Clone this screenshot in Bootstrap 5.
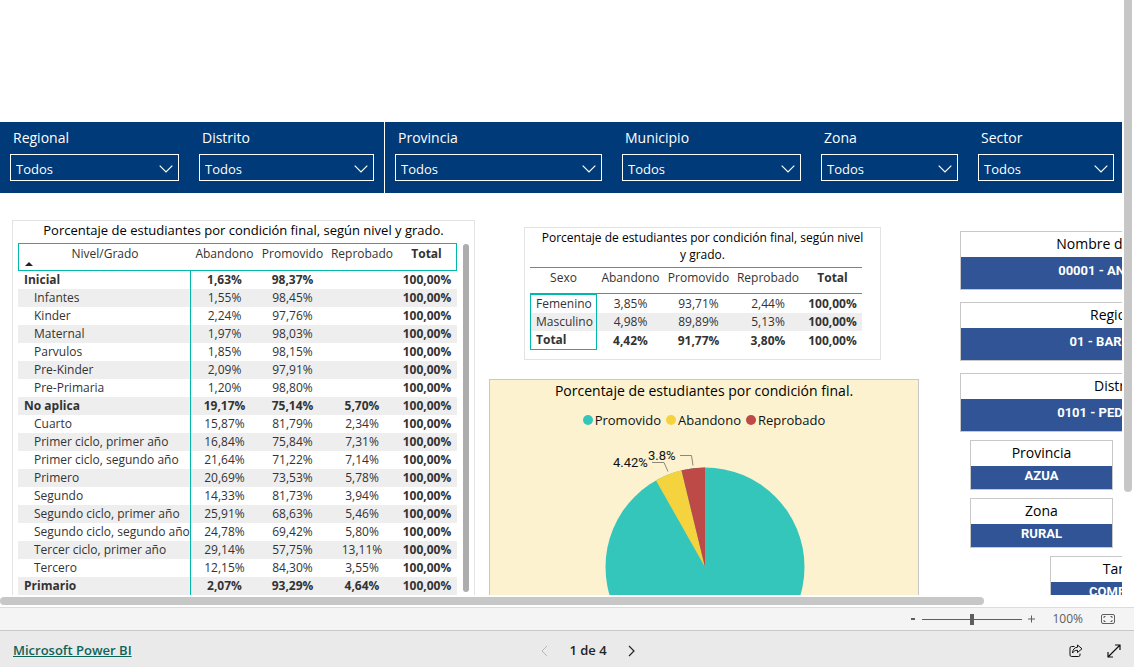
<!DOCTYPE html>
<html lang="es">
<head>
<meta charset="utf-8">
<meta name="viewport" content="width=device-width, initial-scale=1">
<title>Microsoft Power BI</title>
<link href="https://cdn.jsdelivr.net/npm/bootstrap@5.3.0/dist/css/bootstrap.min.css" rel="stylesheet">
<style>
  :root { --navy: #003a78; --card-blue: #305496; --teal: #01b8aa; --ink: #333; }
  body { font-family: "Open Sans", "Noto Sans", sans-serif; font-size: 12px; color: var(--ink); background: #fff; }

  /* Report viewport with its own scrollbars */
  .report-area { min-height: 0; padding-right: 12px; }
  .report-clip { min-height: 0; }
  .scroll-v { top: -8px; right: 2px; width: 8px; height: 500px; border-radius: 4px; background: #c7c7c7; }
  .scroll-h-track { height: 12px; padding-top: 2px; }
  .scroll-h { height: 8px; width: 87.7%; border-radius: 4px; background: #c7c7c7; }

  /* Filter band */
  .filter-band { margin-top: 122px; background: var(--navy); color: #fff; display: grid; grid-template-columns: 385fr 737fr; }
  .filter-group { display: grid; column-gap: 20px; padding: 6px 10px 12px; }
  .filter-group.geo { grid-template-columns: 169fr 175fr; border-right: 1px solid #fff; }
  .filter-group.place { grid-template-columns: 207fr 179fr 137fr 136fr; padding-right: 8px; }
  .filter-group label { font-size: 14px; line-height: 20px; padding-left: 3px; margin-bottom: 6px; }
  .filter-group .form-select {
    height: 27px; padding: 3px 28px 0 5px; font-size: 13px; line-height: 22px; color: #fff;
    background-color: transparent; border: 1px solid #fff; border-radius: 0;
    background-image: url("data:image/svg+xml,%3Csvg xmlns='http://www.w3.org/2000/svg' viewBox='0 0 14 8'%3E%3Cpath d='M.7.7 7 7 13.300.7' fill='none' stroke='%23fff' stroke-width='1.200'/%3E%3C/svg%3E");
    background-size: 14px 8px; background-position: right 5px top 10px;
  }
  .filter-group option { color: #000; }

  /* Report body */
  .report-grid { display: grid; grid-template-columns: 463px 430px 343px; column-gap: 14px; padding-left: 12px; min-width: 1280px; align-items: start; }
  .visual { border: 1px solid #e3e3e3; background: #fff; }
  .visual-title { font-size: 13px; line-height: 17px; color: #000; text-align: center; margin: 0; font-weight: 400; }

  .matrix { border-collapse: separate; border-spacing: 0; table-layout: fixed; }
  .matrix th, .matrix td { padding: 0; text-align: center; line-height: 18px; font-weight: 400; white-space: nowrap; }
  .matrix tbody tr.striped > * { background: #eee; }
  .matrix .fw-bold > *, .matrix tr > :last-child { font-weight: 700; }
  .matrix tbody th { text-align: left; padding-left: 16px; }
  .matrix tbody .fw-bold > th { padding-left: 6px; }
  .matrix thead th { vertical-align: top; height: 27px; border: 0 solid var(--teal); border-width: 1px 0; padding-top: 1px; }

  .by-grade { margin-top: 27px; padding: 1px 5px 0; }
  .by-grade .matrix { width: 439px; }
  .by-grade thead th { height: 28px; }
  .by-grade thead th:first-child { border-left-width: 1px; }
  .by-grade thead th:last-child { border-right-width: 1px; }
  .by-grade tbody th { border-right: 1px solid var(--teal); }
  .sort-mark { bottom: 4px; left: 6px; }
  .inner-scroll { width: 6px; height: 348px; border-radius: 3px; background: #adadad; margin-top: 1px; }

  .by-sex { margin: 34px 38px 0 35px; padding: 1px 5px 9px; }
  .by-sex .visual-title { font-size: 12px; padding-bottom: 4px; }
  .by-sex .matrix { width: 332px; }
  .by-sex tbody th, .by-sex tbody .fw-bold > th { padding-left: 5px; border: 0 solid var(--teal); border-width: 0 1px; }
  .by-sex tbody tr:first-child > * { border-top: 1px solid transparent; }
  .by-sex tbody tr:first-child > th { border-top-color: var(--teal); }
  .by-sex tbody tr:last-child th { border-bottom-width: 1px; }

  .pie-visual { margin-top: 19px; border-color: #c8c8c8; background: #fcf2cf; }
  .pie-visual .visual-title { font-size: 14px; line-height: 22px; }
  .legend-list { gap: 5px; margin: 8px 0 0; color: #111; font-size: 13px; line-height: 20px; }
  .legend-dot { width: 10px; height: 10px; border-radius: 50%; margin-right: 2px; }
  .pie-visual svg text { font: 400 13px Roboto, sans-serif; fill: #111; }

  .info-cards { margin: 38px 0 0 27px; }
  .info-card { border: 1px solid #c8c8c8; text-align: center; background: #fff; }
  .info-card + .info-card { margin-top: 12px; }
  .info-card dt { font-size: 14px; line-height: 20px; padding: 2px 0 3px; font-weight: 400; color: #000; }
  .info-card dd { margin: 0; background: var(--card-blue); color: #fff; font: 700 13px/20px Roboto, sans-serif; padding: 4px 0 8px; }
  .info-card + .small-card { width: 143px; margin: 8px 0 0 10px; }
  .info-card.small-card dd { padding: 0 0 3px; }
  .info-card + .shift-card { width: 146px; margin: 8px 0 0 90px; }
  .info-card.shift-card dd { padding-top: 0; }

  /* Bars under the report */
  .zoom-bar { height: 23px; background: #f4f4f4; border-top: 1px solid #dcdcdc; color: #605e5c; padding-right: 19px; }
  .zoom-bar button, .foot-bar button { border: 0; background: none; padding: 0; line-height: 1; color: inherit; display: inline-flex; }
  .zoom-range { appearance: none; width: 100px; height: 12px; margin: 0 6px; background: linear-gradient(#605e5c, #605e5c) center / 100% 1px no-repeat; }
  .zoom-range::-webkit-slider-thumb { appearance: none; width: 4px; height: 11px; background: #605e5c; }
  .zoom-level { margin: 0 18px 0 16px; }
  .foot-bar { height: 37px; background: #eaeaea; border-top: 1px solid #c8c8c8; color: #252423; padding: 3px 13px 0; font-size: 13px; font-weight: 600; display: grid; grid-template-columns: 1fr auto 1fr; align-items: center; }
  .foot-bar a { color: #0e6457; }
  .foot-bar nav { padding-left: 42px; gap: 21px; }
</style>
</head>
<body>
<div class="d-flex flex-column vh-100 overflow-hidden">

  <main class="report-area position-relative flex-fill d-flex flex-column overflow-hidden">
    <div class="report-clip flex-fill overflow-hidden">
      <form class="filter-band">
        <div class="filter-group geo">
          <div class="d-flex flex-column"><label for="f-regional">Regional</label><select id="f-regional" class="form-select"><option>Todos</option></select></div>
          <div class="d-flex flex-column"><label for="f-distrito">Distrito</label><select id="f-distrito" class="form-select"><option>Todos</option></select></div>
        </div>
        <div class="filter-group place">
          <div class="d-flex flex-column"><label for="f-provincia">Provincia</label><select id="f-provincia" class="form-select"><option>Todos</option></select></div>
          <div class="d-flex flex-column"><label for="f-municipio">Municipio</label><select id="f-municipio" class="form-select"><option>Todos</option></select></div>
          <div class="d-flex flex-column"><label for="f-zona">Zona</label><select id="f-zona" class="form-select"><option>Todos</option></select></div>
          <div class="d-flex flex-column"><label for="f-sector">Sector</label><select id="f-sector" class="form-select"><option>Todos</option></select></div>
        </div>
      </form>

      <div class="report-grid">
        <section class="visual by-grade">
          <h2 class="visual-title pb-1">Porcentaje de estudiantes por condición final, según nivel y grado.</h2>
          <div class="d-flex justify-content-between">
            <table class="matrix">
              <colgroup><col style="width:173px"><col style="width:67px"><col style="width:69px"><col style="width:70px"><col style="width:60px"></colgroup>
              <thead><tr>
                <th scope="col" class="position-relative">Nivel/Grado
                  <svg class="sort-mark position-absolute" width="8" height="4" viewBox="0 0 8 4" aria-hidden="true"><path d="M0 4 4 0l4 4z" fill="#252423"/></svg></th>
                <th scope="col">Abandono</th><th scope="col">Promovido</th><th scope="col">Reprobado</th><th scope="col">Total</th>
              </tr></thead>
              <tbody>
                <tr class="fw-bold"><th scope="row">Inicial</th><td>1,63%</td><td>98,37%</td><td></td><td>100,00%</td></tr>
                <tr class="striped"><th scope="row">Infantes</th><td>1,55%</td><td>98,45%</td><td></td><td>100,00%</td></tr>
                <tr><th scope="row">Kinder</th><td>2,24%</td><td>97,76%</td><td></td><td>100,00%</td></tr>
                <tr class="striped"><th scope="row">Maternal</th><td>1,97%</td><td>98,03%</td><td></td><td>100,00%</td></tr>
                <tr><th scope="row">Parvulos</th><td>1,85%</td><td>98,15%</td><td></td><td>100,00%</td></tr>
                <tr class="striped"><th scope="row">Pre-Kinder</th><td>2,09%</td><td>97,91%</td><td></td><td>100,00%</td></tr>
                <tr><th scope="row">Pre-Primaria</th><td>1,20%</td><td>98,80%</td><td></td><td>100,00%</td></tr>
                <tr class="fw-bold striped"><th scope="row">No aplica</th><td>19,17%</td><td>75,14%</td><td>5,70%</td><td>100,00%</td></tr>
                <tr><th scope="row">Cuarto</th><td>15,87%</td><td>81,79%</td><td>2,34%</td><td>100,00%</td></tr>
                <tr class="striped"><th scope="row">Primer ciclo, primer año</th><td>16,84%</td><td>75,84%</td><td>7,31%</td><td>100,00%</td></tr>
                <tr><th scope="row">Primer ciclo, segundo año</th><td>21,64%</td><td>71,22%</td><td>7,14%</td><td>100,00%</td></tr>
                <tr class="striped"><th scope="row">Primero</th><td>20,69%</td><td>73,53%</td><td>5,78%</td><td>100,00%</td></tr>
                <tr><th scope="row">Segundo</th><td>14,33%</td><td>81,73%</td><td>3,94%</td><td>100,00%</td></tr>
                <tr class="striped"><th scope="row">Segundo ciclo, primer año</th><td>25,91%</td><td>68,63%</td><td>5,46%</td><td>100,00%</td></tr>
                <tr><th scope="row">Segundo ciclo, segundo año</th><td>24,78%</td><td>69,42%</td><td>5,80%</td><td>100,00%</td></tr>
                <tr class="striped"><th scope="row">Tercer ciclo, primer año</th><td>29,14%</td><td>57,75%</td><td>13,11%</td><td>100,00%</td></tr>
                <tr><th scope="row">Tercero</th><td>12,15%</td><td>84,30%</td><td>3,55%</td><td>100,00%</td></tr>
                <tr class="fw-bold striped"><th scope="row">Primario</th><td>2,07%</td><td>93,29%</td><td>4,64%</td><td>100,00%</td></tr>
                <tr><th scope="row">&nbsp;</th><td></td><td></td><td></td><td></td></tr>
              </tbody>
            </table>
            <div class="inner-scroll"></div>
          </div>
        </section>

        <div>
          <section class="visual by-sex">
            <h2 class="visual-title">Porcentaje de estudiantes por condición final, según nivel<br>y grado.</h2>
            <table class="matrix">
              <colgroup><col style="width:67px"><col style="width:67px"><col style="width:69px"><col style="width:70px"><col style="width:59px"></colgroup>
              <thead><tr><th scope="col">Sexo</th><th scope="col">Abandono</th><th scope="col">Promovido</th><th scope="col">Reprobado</th><th scope="col">Total</th></tr></thead>
              <tbody>
                <tr><th scope="row">Femenino</th><td>3,85%</td><td>93,71%</td><td>2,44%</td><td>100,00%</td></tr>
                <tr class="striped"><th scope="row">Masculino</th><td>4,98%</td><td>89,89%</td><td>5,13%</td><td>100,00%</td></tr>
                <tr class="fw-bold"><th scope="row">Total</th><td>4,42%</td><td>91,77%</td><td>3,80%</td><td>100,00%</td></tr>
              </tbody>
            </table>
          </section>

          <section class="visual pie-visual">
            <h2 class="visual-title">Porcentaje de estudiantes por condición final.</h2>
            <ul class="legend-list list-unstyled d-flex justify-content-center">
              <li class="d-flex align-items-center"><span class="legend-dot" style="background:#35c6bb"></span>Promovido</li>
              <li class="d-flex align-items-center"><span class="legend-dot" style="background:#f5d33f"></span>Abandono</li>
              <li class="d-flex align-items-center"><span class="legend-dot" style="background:#be4a47"></span>Reprobado</li>
            </ul>
            <svg class="d-block w-100" viewBox="0 0 428 260" role="img" aria-label="Promovido 91,77%, Abandono 4,42%, Reprobado 3,8%">
              <circle cx="215" cy="137" r="99.500" fill="#35c6bb"/>
              <path d="M215 137 166 50.400A99.500 99.500 0 0 1 191.500 40.300Z" fill="#f5d33f"/>
              <path d="M215 137 191.500 40.300A99.500 99.500 0 0 1 215 37.500Z" fill="#be4a47"/>
              <path d="M162 32.500h12l4 9M190 25.500h11.500l1.500 10" fill="none" stroke="#8c8878"/>
              <text x="123" y="37">4.42%</text>
              <text x="158" y="30">3.8%</text>
            </svg>
          </section>
        </div>

        <dl class="info-cards">
          <div class="info-card"><dt>Nombre del centro</dt><dd>00001 - ANACAONA</dd></div>
          <div class="info-card"><dt>Regional</dt><dd>01 - BARAHONA</dd></div>
          <div class="info-card"><dt>Distrito</dt><dd>0101 - PEDERNALES</dd></div>
          <div class="info-card small-card"><dt>Provincia</dt><dd>AZUA</dd></div>
          <div class="info-card small-card"><dt>Zona</dt><dd>RURAL</dd></div>
          <div class="info-card shift-card"><dt>Tanda</dt><dd>COMPLETA</dd></div>
        </dl>
      </div>
    </div>
    <div class="scroll-h-track flex-shrink-0"><div class="scroll-h"></div></div>
    <div class="scroll-v position-absolute"></div>
  </main>

  <div class="zoom-bar flex-shrink-0 d-flex align-items-center justify-content-end">
    <button type="button" aria-label="Alejar"><svg width="5" height="10" viewBox="0 0 5 10"><path d="M0 5h4" stroke="currentColor" stroke-width="2"/></svg></button>
    <input class="zoom-range" type="range" min="0" max="100" value="50" aria-label="Zoom">
    <button type="button" aria-label="Acercar"><svg width="8" height="8" viewBox="0 0 8 8"><path d="M0 4h7M3.500.500v7" stroke="currentColor"/></svg></button>
    <span class="zoom-level">100%</span>
    <button type="button" aria-label="Ajustar a la página"><svg width="14" height="10" viewBox="0 0 14 10" fill="none" stroke="currentColor"><rect x=".5" y=".5" width="13" height="9" rx="1.500"/><path d="M3 4V2.500h1.500M9.500 2.500H11V4M11 6v1.500H9.500M4.500 7.500H3V6"/></svg></button>
  </div>

  <footer class="foot-bar flex-shrink-0">
    <div><a href="#">Microsoft Power BI</a></div>
    <nav class="d-flex align-items-center" aria-label="Páginas">
      <button type="button" aria-label="Página anterior" disabled><svg width="7" height="12" viewBox="0 0 7 12" fill="none" stroke="#b8b8b8"><path d="M6 1 1 6l5 5"/></svg></button>
      <span>1 de 4</span>
      <button type="button" aria-label="Página siguiente"><svg width="7" height="12" viewBox="0 0 7 12" fill="none" stroke="currentColor" stroke-width="1.200"><path d="m1 1 5 5-5 5"/></svg></button>
    </nav>
    <div class="d-flex justify-content-end align-items-center">
      <button type="button" aria-label="Compartir"><svg width="14" height="14" viewBox="0 0 14 14" fill="none" stroke="#111" stroke-linejoin="round"><path d="M5.500 2.500h-3a1.500 1.500 0 0 0-1.500 1.500v7A1.500 1.500 0 0 0 2.500 12.500h7A1.500 1.500 0 0 0 11 11V9.500"/><path d="M8.500 1 13 4.800 8.500 8.500V6.300C6 6.200 4.700 7.200 3.500 9c.2-3.500 2-5.600 5-5.800z"/></svg></button>
      <button type="button" class="ms-4" aria-label="Pantalla completa"><svg width="14" height="14" viewBox="0 0 14 14" fill="none" stroke="#111" stroke-width="1.200"><path d="M1.500 12.500l11-11M8 1h5v5M1 8v5h5"/></svg></button>
    </div>
  </footer>
</div>
<script src="https://cdn.jsdelivr.net/npm/bootstrap@5.3.0/dist/js/bootstrap.bundle.min.js"></script>
</body>
</html>
